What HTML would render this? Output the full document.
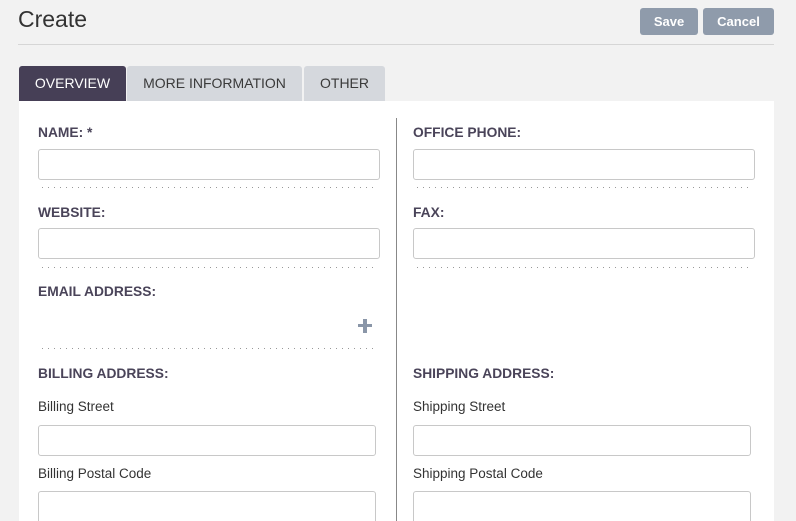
<!DOCTYPE html>
<html><head><style>
html,body{margin:0;width:796px;height:521px;overflow:hidden}
body{background:#f2f2f2;font-family:"Liberation Sans",sans-serif;position:relative}
.a{position:absolute}
h1{position:absolute;left:18px;top:6px;margin:0;font-size:23px;font-weight:normal;color:#333}
.btn{position:absolute;top:8px;height:27px;background:#8f9bab;color:#fff;font-weight:bold;font-size:13px;line-height:27px;text-align:center;border-radius:3px}
.tab{position:absolute;top:66px;height:35px;line-height:35px;text-align:center;font-size:14px;color:#3a3a3a;background:#d5d8dd;border-radius:3px 3px 0 0}
.lbl{position:absolute;font-size:13.8px;font-weight:bold;color:#4a4459}
.sub{position:absolute;font-size:13.5px;color:#333}
.in{position:absolute;height:29px;border:1px solid #c8c8c8;border-radius:3px;background:#fff;box-sizing:border-box}
.dot{position:absolute;height:1px;background-image:linear-gradient(to right,#999 1px,transparent 1px);background-size:6px 1px}
</style></head><body>
<h1>Create</h1>
<div class="a" style="left:18px;top:44px;width:756px;height:1px;background:#d6d6d6"></div>
<div class="btn" style="left:640px;width:58px">Save</div>
<div class="btn" style="left:703px;width:71px">Cancel</div>
<div class="tab" style="left:19px;width:107px;background:#463f56;color:#fff">OVERVIEW</div>
<div class="tab" style="left:127px;width:175px">MORE INFORMATION</div>
<div class="tab" style="left:304px;width:81px">OTHER</div>
<div class="a" style="left:19px;top:101px;width:755px;height:420px;background:#fff"></div>
<div class="a" style="left:396px;top:118px;width:1px;height:403px;background:#888"></div>

<div class="lbl" style="left:38px;top:125px">NAME: *</div>
<div class="in" style="left:38px;top:149px;width:342px;height:31px"></div>
<div class="dot" style="left:42px;top:187px;width:336px"></div>
<div class="lbl" style="left:38px;top:205px">WEBSITE:</div>
<div class="in" style="left:38px;top:228px;width:342px;height:31px"></div>
<div class="dot" style="left:42px;top:267px;width:336px"></div>
<div class="lbl" style="left:38px;top:284px">EMAIL ADDRESS:</div>
<div class="a" style="left:358px;top:324px;width:14px;height:3px;background:#8a96a8"></div>
<div class="a" style="left:363px;top:319px;width:4px;height:14px;background:#8a96a8"></div>
<div class="dot" style="left:42px;top:348px;width:336px"></div>
<div class="lbl" style="left:38px;top:366px">BILLING ADDRESS:</div>
<div class="sub" style="left:38px;top:399px">Billing Street</div>
<div class="in" style="left:38px;top:425px;width:338px;height:31px"></div>
<div class="sub" style="left:38px;top:466px">Billing Postal Code</div>
<div class="in" style="left:38px;top:491px;width:338px;height:40px"></div>

<div class="lbl" style="left:413px;top:125px">OFFICE PHONE:</div>
<div class="in" style="left:413px;top:149px;width:342px;height:31px"></div>
<div class="dot" style="left:417px;top:187px;width:336px"></div>
<div class="lbl" style="left:413px;top:205px">FAX:</div>
<div class="in" style="left:413px;top:228px;width:342px;height:31px"></div>
<div class="dot" style="left:417px;top:267px;width:336px"></div>
<div class="lbl" style="left:413px;top:366px">SHIPPING ADDRESS:</div>
<div class="sub" style="left:413px;top:399px">Shipping Street</div>
<div class="in" style="left:413px;top:425px;width:338px;height:31px"></div>
<div class="sub" style="left:413px;top:466px">Shipping Postal Code</div>
<div class="in" style="left:413px;top:491px;width:338px;height:40px"></div>
</body></html>
